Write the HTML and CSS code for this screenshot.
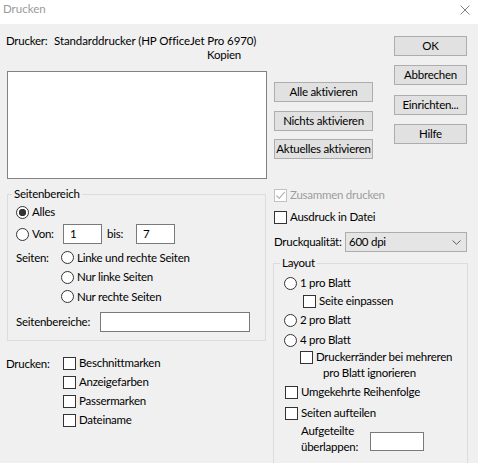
FILE: index.html
```html
<!DOCTYPE html>
<html lang="de">
<head>
<meta charset="utf-8">
<title>Drucken</title>
<link rel="stylesheet" href="styles.css">
</head>
<body>
<div class="dialog">
  <header class="titlebar">
    <span class="title">Drucken</span>
    <svg class="close" width="10" height="10" viewBox="0 0 10 10"><path d="M0.5 0.5 L9.5 9.5 M9.5 0.5 L0.5 9.5" stroke="#808080" stroke-width="1" fill="none"/></svg>
  </header>

  <section class="top">
    <div class="printer-col">
      <div class="printer-row"><span class="lbl-drucker">Drucker:</span><span class="printer-name">Standarddrucker (HP OfficeJet Pro 6970)</span></div>
      <div class="kopien">Kopien</div>
      <div class="listbox"></div>
    </div>
    <div class="mid-col">
      <button class="btn">Alle aktivieren</button>
      <button class="btn">Nichts aktivieren</button>
      <button class="btn">Aktuelles aktivieren</button>
    </div>
    <div class="right-col">
      <button class="btn">OK</button>
      <button class="btn">Abbrechen</button>
      <button class="btn">Einrichten...</button>
      <button class="btn">Hilfe</button>
    </div>
  </section>

  <section class="bottom">
    <div class="left-col">
      <fieldset class="group range">
        <legend>Seitenbereich</legend>
        <div class="opt row-alles"><span class="radio checked"></span><span>Alles</span></div>
        <div class="row-von">
          <span class="opt von-opt"><span class="radio"></span><span>Von:</span></span>
          <span class="field f-von">1</span>
          <span class="bis">bis:</span>
          <span class="field f-bis">7</span>
        </div>
        <div class="seiten">
          <span class="seiten-lbl">Seiten:</span>
          <div class="seiten-opts">
            <div class="opt srow"><span class="radio"></span><span>Linke und rechte Seiten</span></div>
            <div class="opt srow"><span class="radio"></span><span>Nur linke Seiten</span></div>
            <div class="opt srow"><span class="radio"></span><span>Nur rechte Seiten</span></div>
          </div>
        </div>
        <div class="row-bereiche"><span class="bereiche-lbl">Seitenbereiche:</span><span class="field f-bereiche"></span></div>
      </fieldset>

      <div class="drucken">
        <span class="drucken-lbl">Drucken:</span>
        <div class="drucken-opts">
          <div class="opt drow"><span class="check"></span><span>Beschnittmarken</span></div>
          <div class="opt drow"><span class="check"></span><span>Anzeigefarben</span></div>
          <div class="opt drow"><span class="check"></span><span>Passermarken</span></div>
          <div class="opt drow"><span class="check"></span><span>Dateiname</span></div>
        </div>
      </div>
    </div>

    <div class="side-col">
      <div class="opt crow crow1 disabled">
        <span class="check disabled-check"><svg width="11" height="11" viewBox="0 0 11 11"><path d="M1.5 5.5 L4.2 8.3 L9.8 1.8" stroke="#b4b4b4" stroke-width="1.2" fill="none"/></svg></span>
        <span>Zusammen drucken</span>
      </div>
      <div class="opt crow crow2"><span class="check"></span><span>Ausdruck in Datei</span></div>
      <div class="quality">
        <span class="quality-lbl">Druckqualität:</span>
        <div class="select"><span>600 dpi</span><svg class="chev" width="9" height="5" viewBox="0 0 9 5"><path d="M0.5 0.5 L4.5 4.3 L8.5 0.5" stroke="#606060" stroke-width="1" fill="none"/></svg></div>
      </div>

      <fieldset class="group layout">
        <legend>Layout</legend>
        <div class="opt lrow l1"><span class="radio"></span><span>1 pro Blatt</span></div>
        <div class="opt lrow l2"><span class="check"></span><span>Seite einpassen</span></div>
        <div class="opt lrow l3"><span class="radio"></span><span>2 pro Blatt</span></div>
        <div class="opt lrow l4"><span class="radio"></span><span>4 pro Blatt</span></div>
        <div class="opt l5"><span class="check"></span><span class="two-line"><span class="line">Druckerränder bei mehreren</span><span class="line line2">pro Blatt ignorieren</span></span></div>
        <div class="opt lrow l6"><span class="check"></span><span>Umgekehrte Reihenfolge</span></div>
        <div class="opt lrow l7"><span class="check"></span><span>Seiten aufteilen</span></div>
        <div class="l8">
          <span class="overlap-lbl"><span class="line">Aufgeteilte</span><span class="line">überlappen:</span></span>
          <span class="field f-overlap"></span>
        </div>
      </fieldset>
    </div>
  </section>
</div>
</body>
</html>
```

FILE: styles.css
```css
html, body {
  margin: 0;
  padding: 0;
}

body {
  width: 478px;
  height: 463px;
  overflow: hidden;
  background: #f0f0f0;
  font-family: Lato, "Noto Sans", sans-serif;
  font-size: 11.5px;
  letter-spacing: -0.25px;
  line-height: 16px;
  color: #000;
}

.dialog {
  width: 478px;
  height: 463px;
}

/* Title bar */
.titlebar {
  height: 24px;
  background: #fff;
  display: flex;
  justify-content: space-between;
  align-items: flex-start;
}

.title {
  color: #9a9a9a;
  padding: 1px 0 0 3px;
  line-height: 16px;
  letter-spacing: 0;
}

.close {
  margin: 5px 8px 0 0;
}

/* Top area */
.top {
  display: flex;
  align-items: flex-start;
  padding-left: 7px;
}

.printer-col {
  width: 260px;
  padding-top: 10.5px;
}

.printer-row {
  display: flex;
  margin-left: -1px;
  line-height: 11px;
  height: 11px;
  white-space: nowrap;
}

.lbl-drucker {
  width: 48px;
}

.printer-name {
  letter-spacing: -0.1px;
}

.kopien {
  margin-top: 3px;
  line-height: 11px;
  height: 11px;
  padding-left: 200px;
}

.listbox {
  margin-top: 11.5px;
  height: 108px;
  box-sizing: border-box;
  border: 1px solid #828282;
  background: #fff;
}

.mid-col {
  width: 99px;
  margin-left: 7px;
  padding-top: 58px;
  display: flex;
  flex-direction: column;
  gap: 8.5px;
}

.right-col {
  width: 73px;
  margin-left: 21px;
  padding-top: 12px;
  display: flex;
  flex-direction: column;
  gap: 9.3px;
}

.btn {
  display: block;
  width: 100%;
  height: 20px;
  box-sizing: border-box;
  margin: 0;
  padding: 0;
  font: inherit;
  letter-spacing: inherit;
  line-height: 18px;
  color: #000;
  background: #e1e1e1;
  border: 1px solid #adadad;
  border-radius: 0;
  white-space: nowrap;
  text-align: center;
}

/* Bottom area */
.bottom {
  display: flex;
  align-items: flex-start;
  padding-left: 7px;
}

.left-col {
  width: 259px;
}

.group {
  margin: 0;
  border: 1px solid #dcdcdc;
  box-sizing: border-box;
  min-width: 0;
}

.group legend {
  padding: 0 2px;
  margin-left: -4px;
  line-height: 16px;
}

.range {
  width: 259px;
  margin-top: 7px;
  padding: 0 0 8px 8px;
}

.opt {
  display: flex;
  align-items: center;
  white-space: nowrap;
}

.radio,
.check {
  flex-shrink: 0;
  width: 13px;
  height: 13px;
  box-sizing: border-box;
  border: 1px solid #333;
  background: #fff;
  margin-right: 3px;
}

.radio {
  border-radius: 50%;
}

.radio.checked {
  background: radial-gradient(circle, #333 0 3.4px, #fff 4px);
}

.check {
  display: flex;
  align-items: center;
  justify-content: center;
}

.disabled-check {
  border-color: #c2c2c2;
}

.disabled {
  color: #9d9d9d;
}

.row-alles {
  margin-top: 1px;
  height: 18px;
}

.row-von {
  margin-top: 3px;
  height: 20px;
  display: flex;
  align-items: center;
}

.von-opt {
  width: 47px;
}

.field {
  display: block;
  height: 20px;
  box-sizing: border-box;
  border: 1px solid #7a7a7a;
  background: #fff;
  padding-left: 6px;
  line-height: 18px;
}

.f-von,
.f-bis {
  width: 39px;
}

.bis {
  width: 29px;
  margin-left: 5px;
}

.seiten {
  margin-top: 4px;
  display: flex;
}

.seiten-lbl {
  width: 45px;
  line-height: 19.5px;
}

.srow {
  height: 19.5px;
}

.row-bereiche {
  margin-top: 5.5px;
  display: flex;
  align-items: center;
}

.bereiche-lbl {
  width: 84px;
}

.f-bereiche {
  width: 150px;
}

.drucken {
  margin-top: 12.5px;
  margin-left: -1px;
  display: flex;
}

.drucken-lbl {
  width: 57px;
  line-height: 19px;
}

.drow {
  height: 19px;
}

/* Right lower column */
.side-col {
  width: 195px;
  margin-left: 7px;
}

.crow {
  height: 20px;
  padding-left: 1px;
}

.crow1 {
  margin-top: 6px;
}

.crow2 {
  margin-top: 2px;
}

.quality {
  margin-top: 5px;
  display: flex;
  align-items: center;
  padding-left: 1px;
}

.quality-lbl {
  width: 71px;
  white-space: nowrap;
}

.select {
  width: 122px;
  height: 20px;
  box-sizing: border-box;
  border: 1px solid #adadad;
  background: #e5e5e5;
  display: flex;
  align-items: center;
  justify-content: space-between;
  padding: 0 5px 0 3px;
}

.layout {
  margin-top: 3px;
  padding: 0 0 0 10px;
  height: 230px;
}

.lrow {
  height: 18px;
}

.l1 { margin-top: 3px; }
.l2 { padding-left: 19px; }
.l3 { margin-top: 1px; }
.l4 { margin-top: 2px; }

.l5 {
  align-items: flex-start;
  padding-left: 16px;
}

.l5 .check {
  margin-top: 1.5px;
}

.two-line,
.overlap-lbl {
  display: flex;
  flex-direction: column;
}

.line2 {
  padding-left: 7px;
}

.l6 { margin-top: 2px; padding-left: 1px; }
.l7 { margin-top: 3px; padding-left: 1px; }

.l8 {
  margin-top: 1px;
  display: flex;
  align-items: flex-start;
  padding-left: 17px;
}

.overlap-lbl {
  width: 69px;
}

.f-overlap {
  width: 54px;
  height: 19px;
  margin-top: 9px;
}
```
